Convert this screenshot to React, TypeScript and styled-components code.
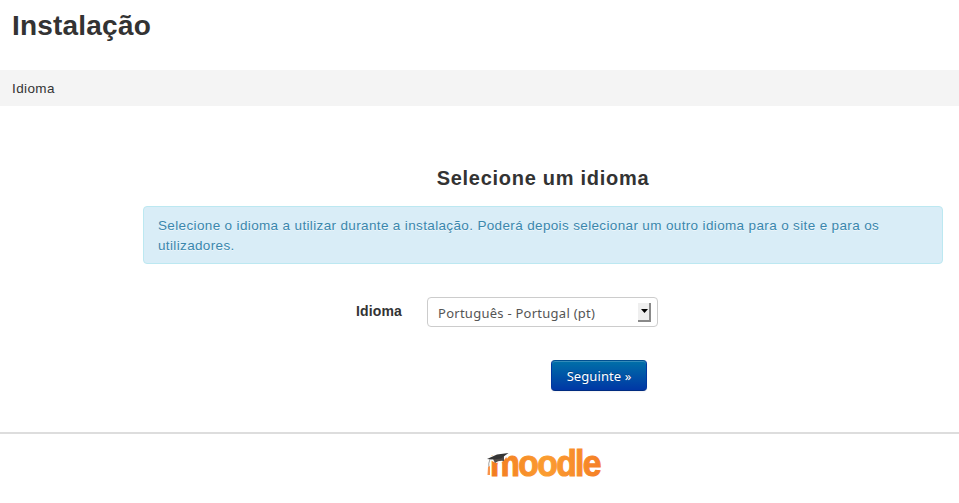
import React from "react";
import styled, { createGlobalStyle } from "styled-components";

const GlobalStyle = createGlobalStyle`
  * { box-sizing: border-box; }
  body {
    margin: 0;
    background: #fff;
    color: #333;
    font: 13.5px/20px "Liberation Sans", Arial, sans-serif;
    overflow: hidden;
  }
`;

const Page = styled.div`
  display: flex;
  flex-direction: column;
  height: 503px;
`;

const Header = styled.header`
  height: 70px;
  padding: 6px 12px;
`;

const Title = styled.h1`
  margin: 0;
  font-size: 28px;
  line-height: 40px;
  letter-spacing: 0.2px;
`;

const Breadcrumb = styled.nav`
  height: 36px;
  padding: 9px 12px;
  background: #f4f4f4;
  letter-spacing: 0.4px;
`;

const Main = styled.main`
  height: 326px;
  padding: 52px 16px 0 143px;
`;

const Heading = styled.h2`
  margin: 0 0 8px;
  font-size: 20px;
  line-height: 40px;
  letter-spacing: 0.72px;
  text-align: center;
`;

const Notice = styled.div`
  height: 58px;
  padding: 9px 14px 7px;
  border: 1px solid #bce8f1;
  border-radius: 4px;
  background: #d9edf7;
  color: #3a87ad;
  letter-spacing: 0.355px;
  text-shadow: 0 1px 0 rgba(255, 255, 255, 0.5);
`;

const Field = styled.div`
  display: flex;
  margin: 33px 0 0 213px;
`;

const Label = styled.label`
  width: 71px;
  padding-top: 4px;
  font-size: 14px;
  font-weight: bold;
  letter-spacing: 0.15px;
`;

const Select = styled.div`
  display: flex;
  align-items: center;
  justify-content: space-between;
  width: 231px;
  height: 30px;
  padding: 2px 6px 0 10px;
  border: 1px solid #ccc;
  border-radius: 4px;
  color: #555;
  font-family: "Noto Sans", sans-serif;
  font-size: 13px;
  letter-spacing: 0.26px;
`;

const Arrow = styled.span`
  display: flex;
  align-items: center;
  justify-content: center;
  width: 13px;
  height: 19px;
  padding-left: 1px;
  margin-top: -2px;
  background: #efefef;
  border-right: 2px solid #898989;
  border-bottom: 2px solid #898989;
`;

const Button = styled.button`
  display: block;
  width: 96px;
  height: 31px;
  margin: 33px 0 0 408px;
  padding: 1px 0 0;
  border: 1px solid #003c99;
  border-color: #004f91 #0037a0 #002b80;
  border-radius: 4px;
  background: linear-gradient(#0070a8, #0037a5);
  box-shadow: inset 0 1px 0 rgba(255, 255, 255, 0.2), 0 1px 2px rgba(0, 0, 0, 0.05);
  color: #fff;
  font: 13px/20px "Noto Sans", sans-serif;
  letter-spacing: 0.08px;
  text-shadow: 0 -1px 0 rgba(0, 0, 0, 0.25);
`;

const Footer = styled.footer`
  height: 71px;
  padding: 7px 0 0 484px;
  border-top: 2px solid #ddd;
`;

const Wordmark = styled.text`
  font: bold 37px "Liberation Sans", Arial, sans-serif;
  letter-spacing: -1.8px;
  fill: url(#orange);
  stroke: url(#orange);
  stroke-width: 1.1px;
`;

function MoodleLogo() {
  return (
    <svg width="130" height="50" viewBox="0 -4 130 50" role="img" aria-label="moodle">
      <defs>
        <linearGradient id="orange" x1="0" y1="0" x2="1" y2="0">
          <stop offset="0" stopColor="#f27a20" />
          <stop offset="0.5" stopColor="#fb9d31" />
          <stop offset="1" stopColor="#f58026" />
        </linearGradient>
      </defs>
      <Wordmark transform="translate(6 30.5) scale(0.91 1)">moodle</Wordmark>
      <path d="M3 13 14 8 25 7 21 14 18 17 12 18 8 16Z" fill="#fff" />
      <path d="M9 14 20 11 20 16Q15 15 11 18Z" fill="#514b48" />
      <path d="M3 14 13 9.5 24.5 8 17 13.5 8 14.5Z" fill="#353535" />
      <path d="M6 14Q4 18 5 24" fill="none" stroke="#777" strokeWidth="0.7" />
      <path d="M4 22 6 21 6 30H3.5Z" fill="#f9944b" />
    </svg>
  );
}

export default function App() {
  return (
    <Page>
      <GlobalStyle />
      <Header>
        <Title>Instalação</Title>
      </Header>
      <Breadcrumb>Idioma</Breadcrumb>
      <Main>
        <Heading>Selecione um idioma</Heading>
        <Notice>
          Selecione o idioma a utilizar durante a instalação. Poderá depois selecionar um outro idioma para o site e para os utilizadores.
        </Notice>
        <Field>
          <Label>Idioma</Label>
          <Select role="combobox" aria-label="Idioma" aria-expanded={false} tabIndex={0}>
            Português - Portugal (pt)
            <Arrow>
              <svg width="7" height="4" viewBox="0 0 7 4">
                <path d="M0 0H7L3.5 4Z" fill="#000" />
              </svg>
            </Arrow>
          </Select>
        </Field>
        <Button>Seguinte »</Button>
      </Main>
      <Footer>
        <MoodleLogo />
      </Footer>
    </Page>
  );
}
